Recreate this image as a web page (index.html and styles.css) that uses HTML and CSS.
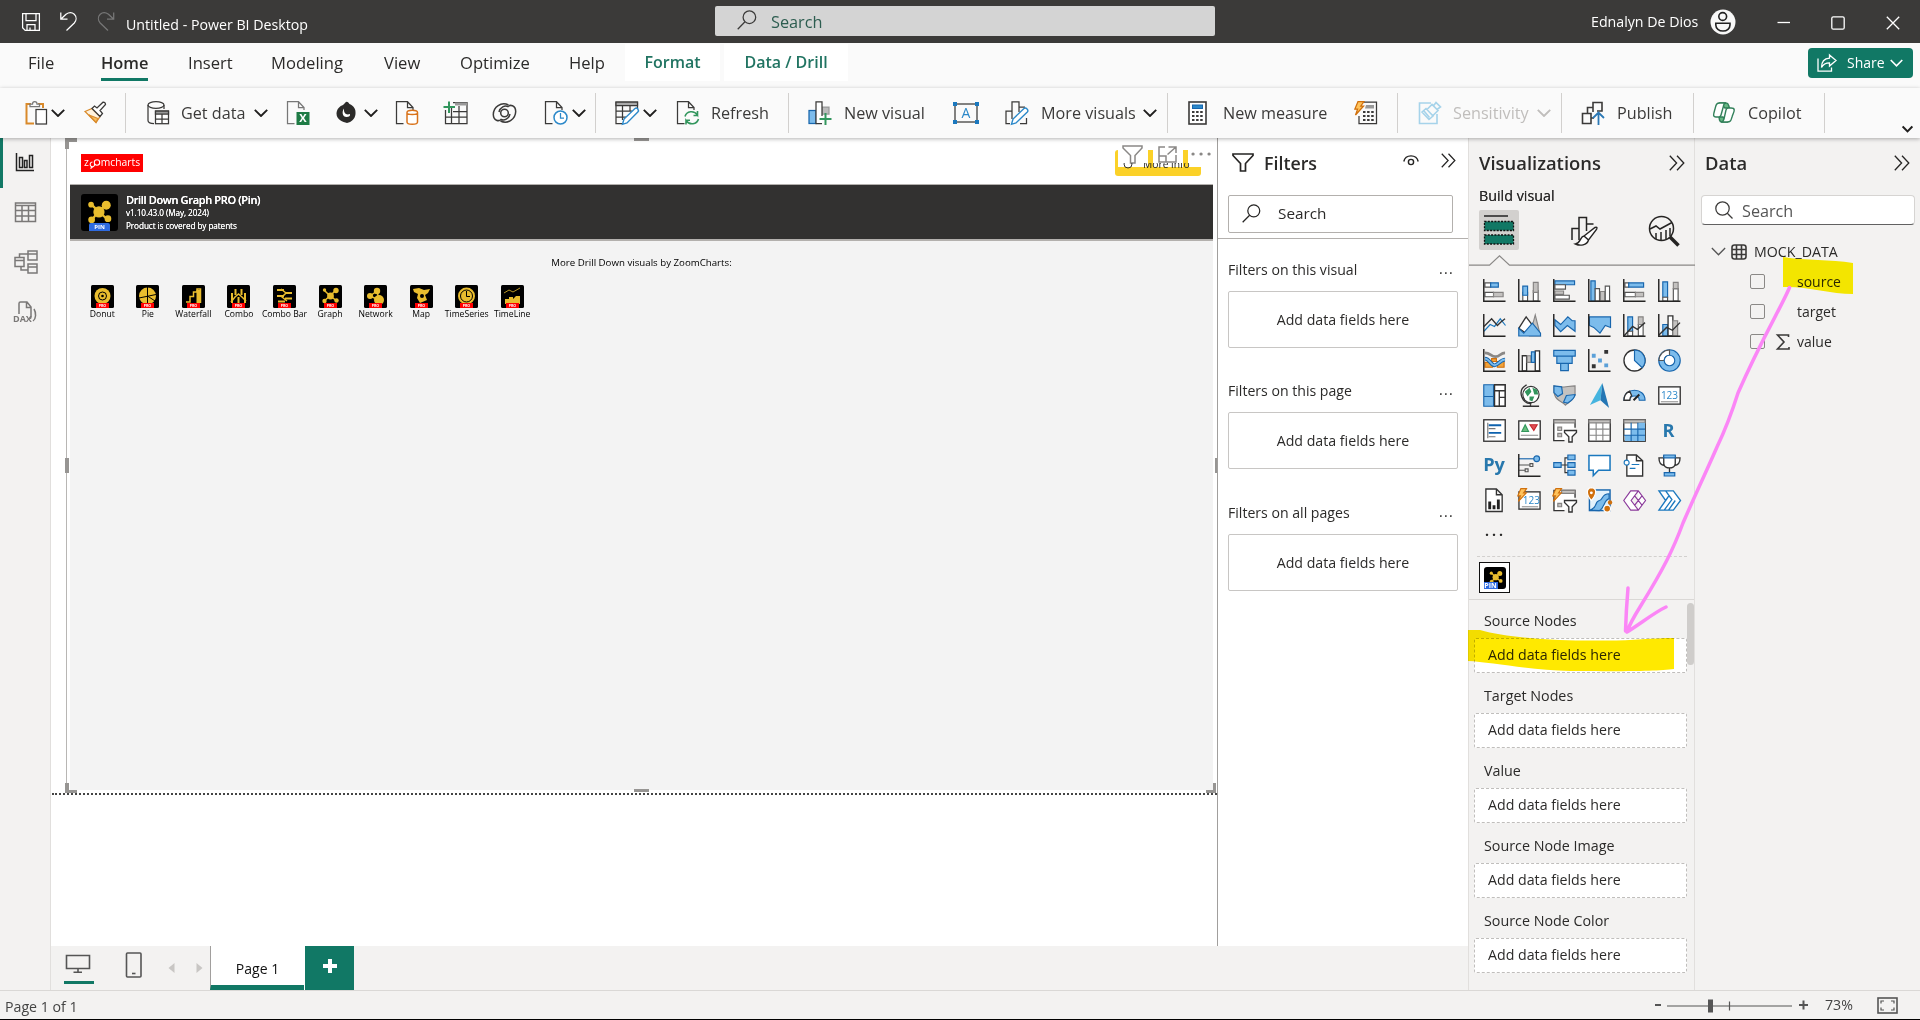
FILE: index.html
```html
<!DOCTYPE html>
<html lang="en">
<head>
<meta charset="utf-8">
<title>Untitled - Power BI Desktop</title>
<link rel="stylesheet" href="styles.css">
</head>
<body>
<svg class="defs" aria-hidden="true">
  <symbol id="chev" viewBox="0 0 14 8"><path d="M.8 .8 7 7 13.2 .8"/></symbol>
  <symbol id="dchev" viewBox="0 0 16 16"><path d="M.8 .8 7.6 8 .8 15.2M8 .8 14.8 8 8 15.2"/></symbol>
  <symbol id="mag" viewBox="0 0 20 20"><circle cx="12.4" cy="7.2" r="6.3"/><path d="M8 11.8.7 19.2"/></symbol>
  <symbol id="doc" viewBox="0 0 24 24"><path d="M8.5 22.500H1.500V.7H12.500L18 6.500V9M12.500.7V6.500H18"/></symbol>
  <symbol id="axes" viewBox="0 0 24 24"><path class="ax" d="M.8 0V23.200H23.500"/></symbol>
  <symbol id="bolt" viewBox="0 0 11 15"><path fill="#ffc35c" stroke="#d0700d" d="M4 .6H10L6.800 5H9.700L1.500 14 3.600 8.200H.8Z"/></symbol>
  <symbol id="graph" viewBox="0 0 24 24"><path stroke="#e9bd2e" stroke-width="2" d="M5 5 11 11 18 5M5 19 11 11 19 18"/><g fill="#e9bd2e" stroke="none"><circle cx="11.500" cy="11.500" r="5"/><circle cx="18" cy="5.500" r="4"/><circle cx="4.500" cy="5" r="2.500"/><circle cx="5" cy="18.500" r="3"/><circle cx="19.500" cy="17.500" r="3"/></g></symbol>
</svg>

<header class="titlebar">
  <svg class="ic" width="18" height="18" viewBox="0 0 18 18"><path d="M.6.6H17.400V17.400H3.200L.6 14.800ZM4 .6V7.500H14V.6M5 17.400V11.500H13V17.400M8 17V14.500"/></svg>
  <svg class="ic" width="18" height="19" viewBox="0 0 18 19"><path d="M.8.5V7.200H7.500M1 7 6 2.200C9 .2 12 .2 14.300 2.300 16.800 4.800 16.500 8.500 14.300 11L6.500 18.500"/></svg>
  <svg class="ic dim" width="18" height="19" viewBox="0 0 18 19"><path d="M16.700.5V7.200H10M16.500 7 11.500 2.200C8.500.2 5.500.2 3.200 2.300.7 4.800 1 8.500 3.200 11L11 18.500"/></svg>
  <span class="doc-title">Untitled - Power BI Desktop</span>
  <div class="top-search"><svg class="ic" width="20" height="20"><use href="#mag"/></svg><span>Search</span></div>
  <span class="user">Ednalyn De Dios</span>
  <svg class="avatar" width="26" height="26" viewBox="0 0 26 26"><circle cx="13" cy="13" r="12.500" fill="#f8f8f8"/><g fill="none" stroke="#222" stroke-width="1.600"><circle cx="12.700" cy="7.500" r="3.900"/><path d="M5.800 14.200H20V16C20 19.500 17 22 13 22S5.800 19.500 5.800 16Z"/></g></svg>
  <svg class="win" width="14" height="14" viewBox="0 0 14 14"><path d="M.5 6.500H13"/></svg>
  <svg class="win" width="14" height="14" viewBox="0 0 14 14"><rect x=".8" y=".8" width="12.400" height="12.400" rx="1.500"/></svg>
  <svg class="win" width="14" height="14" viewBox="0 0 14 14"><path d="M.8.8 13.200 13.200M13.200.8.8 13.200"/></svg>
</header>

<nav class="tabs">
  <span>File</span><span class="active">Home</span><span>Insert</span><span>Modeling</span><span>View</span><span>Optimize</span><span>Help</span><span class="ctx">Format</span><span class="ctx">Data / Drill</span>
  <button class="share"><svg width="20" height="18" viewBox="0 0 20 18"><path d="M1 4.500V17.200H14.500V13.500"/><path d="M12.500 1 19 6.500 12.500 12V8.800C8.500 8.800 6 10.500 4.500 13.500 4.500 8 7.500 4.500 12.500 4.200Z"/></svg><span>Share</span><svg class="share-cv" width="13" height="8"><use href="#chev"/></svg></button>
</nav>

<section class="ribbon">
  <svg class="ic" width="24" height="24" viewBox="0 0 24 24"><path stroke="#d98a2b" stroke-width="2" d="M6 3H1.500V22.500H9M13 3H18V7"/><path fill="#fafafa" stroke="#777" d="M5 5.500V3H7.500C7.500-.2 12 -.2 12 3H14.500V5.500Z"/><rect x="11" y="8.500" width="10.500" height="14.500" fill="#fff"/></svg>
  <svg class="cv"><use href="#chev"/></svg>
  <svg class="ic" width="24" height="24" viewBox="0 0 24 24"><path stroke="#d98a2b" fill="#fff3df" d="M2 10.500 9 7.500 17 15.500 13 21.500Z"/><path fill="#f6bd5c" stroke="#d98a2b" d="M6 14 15 17.500 13 21.500Z"/><path fill="#fff" d="M9 7.500 11.500 5 14 7 20 1.200Q22.500 1 22.500 3.500L17 9.500 19.500 12.500 17 15.500Z"/></svg>
  <i class="sep"></i>
  <svg class="ic" width="24" height="24" viewBox="0 0 24 24"><ellipse cx="10" cy="4" rx="8" ry="3.300"/><path d="M2 4V19.500C2 21 4 22.500 8 22.500M18 4V8"/><rect x="9.500" y="10" width="13" height="12.700" fill="#fff"/><path fill="#999" d="M9.500 10H22.500V13H9.500Z"/><path d="M16 13V22.500M9.500 18H22.500"/></svg>
  <span>Get data</span>
  <svg class="cv"><use href="#chev"/></svg>
  <svg class="ic" width="24" height="24" viewBox="0 0 24 24"><use href="#doc" stroke="#777"/><rect x="10.500" y="11" width="13" height="13" fill="#1e7b45" stroke="none"/><text x="17" y="21" class="t-x">X</text></svg>
  <svg class="ic" width="24" height="24" viewBox="0 0 24 24"><path fill="#2b2a29" stroke="none" d="M10 2Q12-1 14.500 3C19 5 21 8 20.500 13S16.500 21 12 22C8 21 1.500 19 1.500 12.500 1.500 8 5 5 8 4Z"/><path fill="#fff" stroke="none" d="M9 7.500C6.500 11 7.500 16 11.500 16 14 16 15.500 15 15 13 11 14.500 8.500 12 9 7.500Z"/></svg>
  <svg class="cv"><use href="#chev"/></svg>
  <svg class="ic" width="24" height="24" viewBox="0 0 24 24"><use href="#doc"/><path fill="#fff" stroke="#d9731b" stroke-width="1.500" d="M12 11.500V21C12 24 22.500 24 22.500 21V11.500C22.500 8.500 12 8.500 12 11.500ZM12 12C12 14 22.500 14 22.500 12"/></svg>
  <svg class="ic" width="26" height="24" viewBox="0 0 26 24"><path d="M2.500 9V22.500H24V1.500H10M2.500 16H24M8.500 7V22.500M16 5V22.500M10 10.500H24"/><path fill="#999" stroke="none" d="M12 1.500H24V4.500H12Z"/><path stroke="#32965d" stroke-width="2" d="M6 .5V12M.5 6H12"/></svg>
  <svg class="ic swirl" width="25" height="24" viewBox="0 0 25 24"><circle cx="12.500" cy="12" r="3.800"/><path d="M16.500 4C9 .5 1.500 6 1.300 13.500 1.500 20 7 20.500 9 18.500 12 20 17 18 18 13"/><path d="M8.500 20C16 23.500 23.500 18 23.700 10.500 23.500 4 18 3.500 16 5.500 13 4 8 6 7 11"/></svg>
  <svg class="ic" width="24" height="24" viewBox="0 0 24 24"><use href="#doc"/><circle cx="16.500" cy="16.500" r="6.500" fill="#fff" stroke="#2b88c9" stroke-width="1.500"/><path stroke="#2b88c9" d="M16.500 12V17H20"/></svg>
  <svg class="cv"><use href="#chev"/></svg>
  <i class="sep"></i>
  <svg class="ic" width="24" height="24" viewBox="0 0 24 24"><path d="M22.500 8V1H1V22.500H8M1 10H17M1 16H11M7.500 4V19M15 4V10"/><path fill="#aaa" d="M1 1H22.500V4.500H1Z"/><path fill="#fff" stroke="#2b88c9" stroke-width="1.400" d="M7.500 23.300 9 18 20 7.500C22 6 24.500 9 22.800 11L12 22Z"/></svg>
  <svg class="cv"><use href="#chev"/></svg>
  <svg class="ic" width="24" height="24" viewBox="0 0 24 24"><use href="#doc"/><path fill="#fafafa" stroke="none" d="M9 10H24V24H9Z"/><path stroke="#32965d" stroke-width="1.600" d="M9 15.500C10.500 10 18 9 21.500 14V10M21.500 14.500H17.500M22.500 18C21 23.500 13.500 24.500 10 19.500V23.500M10 19.200H14"/></svg>
  <span>Refresh</span>
  <i class="sep"></i>
  <svg class="ic" width="24" height="24" viewBox="0 0 24 24"><path fill="#bbb" stroke="#999" d="M14 6H21V13H14Z"/><rect x="1" y="9.500" width="7" height="13" fill="#7cbcec" stroke="#1866ad"/><path fill="#fff" d="M14 22.500H8V.8H14V15"/><path stroke="#32965d" stroke-width="2" d="M17.500 12V24M11.500 18H23.500"/></svg>
  <span>New visual</span>
  <svg class="ic" width="26" height="24" viewBox="0 0 26 24"><rect x="2" y="3" width="22" height="18"/><g fill="#1b78be" stroke="none"><path d="M0 1H4V5H0ZM22 1H26V5H22ZM0 19H4V23H0ZM22 19H26V23H22Z"/></g><text x="13" y="17" class="t-a">A</text></svg>
  <svg class="ic" width="24" height="24" viewBox="0 0 24 24"><path d="M5 22.500H1V10H7V.8H14V11M7 10V18M14 6H20M15 22.500H21.500V17"/><path fill="#fff" stroke="#2b88c9" stroke-width="1.400" d="M6.500 23.300 8 18 19 7.500C21 6 24 9 22.300 11L11 22Z"/></svg>
  <span>More visuals</span>
  <svg class="cv"><use href="#chev"/></svg>
  <i class="sep"></i>
  <svg class="ic thick" width="24" height="24" viewBox="0 0 24 24"><rect x="3" y="1" width="17" height="22" fill="#fff"/><rect x="6.500" y="4" width="10" height="3.500" fill="#2b88c9" stroke="#1866ad" stroke-width="1"/><path stroke-width="2.200" stroke-dasharray="2.500 1.600" d="M6 11H17.500M6 15H17.500M6 19H17.500"/></svg>
  <span>New measure</span>
  <svg class="ic" width="24" height="24" viewBox="0 0 24 24"><path d="M10 1H22.500V22.500H5V15"/><path stroke-width="2.200" stroke-dasharray="2.500 1.600" d="M9 11H20.500M9 15H20.500M9 19H20.500"/><path fill="#999" stroke="none" d="M12 4H20V7.500H11Z"/><svg width="11" height="15" viewBox="0 0 11 15"><use href="#bolt"/></svg></svg>
  <i class="sep"></i>
  <svg class="ic pale" width="24" height="24" viewBox="0 0 24 24"><path d="M13 2H1.500V22.500H19V13"/><path d="M4 11 8 7.500 15 15 11 18.500ZM9 8.500 14 3.500 20 9.500 15 14.500M12.500 5 10 7.500M15 5.500 18 1.500 22.500 6 19 8.500M6 10 11.500 16.500"/></svg>
  <span class="off">Sensitivity</span>
  <svg class="cv off"><use href="#chev"/></svg>
  <i class="sep"></i>
  <svg class="ic thick" width="24" height="24" viewBox="0 0 24 24"><path d="M16 10H21V1.500H12V6M12 11V6.500H6.500V12M1.500 22.500V12.500H10V22.500ZM10 17H13"/><path stroke="#2b78b5" stroke-width="1.800" d="M17.500 24V12M12 17 17.500 11.500 23 17"/></svg>
  <span>Publish</span>
  <i class="sep"></i>
  <svg class="ic" width="24" height="24" viewBox="0 0 24 24"><g fill="#fff" stroke="#32805a" stroke-width="1.400"><path fill="#68b984" d="M8 2H14Q16 2 16.500 4L17.500 7H13Z"/><path fill="#68b984" d="M15 21H10Q8 21 7.500 19L7 16H11Z"/><path d="M8 2C4 2 4 4 3 8 2 12 0 16 4 16H7Q8.500 16 9 14L11.500 5Q12 2 14 2ZM19 7H16.500Q14.500 7 14 9L12 18Q11 21 9 21H15C19 21 19 19 20 16 21 12 25 7 19 7Z"/></g></svg>
  <span>Copilot</span>
  <i class="sep"></i>
  <svg class="cv small"><use href="#chev"/></svg>
</section>

<main class="work">
  <aside class="rail">
    <svg class="on" width="22" height="22" viewBox="0 0 22 22"><path d="M2.500 1V18.500H20M5.500 5.500H8.500V15.500H5.500ZM10.500 8.500H13V15.500H10.500ZM15.500 3.500H18.500V15.500H15.500Z"/></svg>
    <svg width="22" height="22" viewBox="0 0 22 22"><path d="M1.500 1H21.500V19.500H1.500ZM1.500 3.500H21.500M1.500 8.500H21.500M1.500 14H21.500M8 4V19.500M14.500 4V19.500"/></svg>
    <svg width="24" height="24" viewBox="0 0 24 24"><path d="M14-1H23V8H14ZM1 5.500H10V14.500H1ZM14 12H23V21H14ZM14 2H23M1 8.500H10M14 15H23M5.500 5.500V2H14M7 14.500V18H14"/></svg>
    <svg width="24" height="24" viewBox="0 0 24 24"><path d="M5 12V1.500Q5 0 6.500 0H13L17 5V15Q17 16.500 15.500 16.500M12.500 0V5.500H17M20 7C22.500 11 22 17 19 19"/><text x="-1" y="20" class="t-dax">DAX</text></svg>
  </aside>

  <div class="stage">
    <div class="canvas">
      <div class="page">
        <div class="brand"><span class="logo">z<svg width="12" height="10" viewBox="0 0 12 10"><circle cx="8" cy="3.500" r="2.700"/><path d="M3.500 3C1 3 .5 6 2 7.300 4 8.500 6 7 5.500 5M1.500 9.500 4 7.500"/></svg>mcharts</span></div>
        <div class="hero">
          <svg width="37" height="37" viewBox="0 0 37 37"><rect width="37" height="37" rx="3"/><svg x="5" y="5" width="27" height="27" viewBox="0 0 24 24" fill="none"><use href="#graph"/></svg><path fill="#2f6be0" d="M8 37V31Q8 29 10 29H27Q29 29 29 31V37Z"/><text x="18.500" y="35" class="t-pin">PIN</text></svg>
          <div class="hero-text"><b>Drill Down Graph PRO (Pin)</b><span>v1.10.43.0 (May, 2024)</span><span>Product is covered by patents</span></div>
        </div>
        <div class="body">
          <p>More Drill Down visuals by ZoomCharts:</p>
          <ul class="minis">
            <li><svg viewBox="0 0 23 23"><rect class="k" width="23" height="23" rx="1.500"/><circle class="y" cx="11.500" cy="11" r="8"/><circle cx="11.500" cy="11" r="4" fill="none" stroke="#000"/><circle cx="11.500" cy="11" r="1.300"/><rect class="r" x="5" y="18" width="13" height="5"/><text x="11.500" y="22">PRO</text></svg>Donut</li>
            <li><svg viewBox="0 0 23 23"><rect class="k" width="23" height="23" rx="1.500"/><circle class="y" cx="11.500" cy="11" r="8.500"/><path class="c" d="M11.500 2V20M3 13 20 9.500M11.500 11 19 16"/><rect class="r" x="5" y="18" width="13" height="5"/><text x="11.500" y="22">PRO</text></svg>Pie</li>
            <li><svg viewBox="0 0 23 23"><rect class="k" width="23" height="23" rx="1.500"/><path class="w" d="M4 17H8V11.500H11.500V7H15V4H18.500V18"/><path class="y" d="M14.500 5H18V18H14.500Z"/><rect class="r" x="5" y="18" width="13" height="5"/><text x="11.500" y="22">PRO</text></svg>Waterfall</li>
            <li><svg viewBox="0 0 23 23"><rect class="k" width="23" height="23" rx="1.500"/><path class="y" d="M4 8H6V18H4ZM7.500 4H9.500V10H7.500ZM13.500 4H15.500V10H13.500ZM17 8H19V18H17ZM10.500 12H12.500V18H10.500Z"/><path class="w" d="M4 17 8 12 11.500 9 15 12 19 16"/><rect class="r" x="5" y="18" width="13" height="5"/><text x="11.500" y="22">PRO</text></svg>Combo</li>
            <li><svg viewBox="0 0 23 23"><rect class="k" width="23" height="23" rx="1.500"/><path class="y" d="M4 4H11V6H4ZM12 7H19V9H12ZM4 10H11V12H4ZM12 12.500H19V14.500H12ZM5 15.500H12V17.500H5Z"/><path class="w" d="M8 4 13 8 9 12 14 16"/><rect class="r" x="5" y="18" width="13" height="5"/><text x="11.500" y="22">PRO</text></svg>Combo Bar</li>
            <li><svg viewBox="0 0 23 23"><rect class="k" width="23" height="23" rx="1.500"/><g class="mini-graph"><path class="w" d="M5 5 11 11 17 5M5 16 11 11 18 16"/><circle class="y" cx="11.500" cy="11" r="3.400"/><circle class="y" cx="17" cy="5.500" r="2.700"/><circle class="y" cx="5.500" cy="5" r="1.700"/><circle class="y" cx="5.500" cy="16" r="2.200"/><circle class="y" cx="17.500" cy="15.500" r="2.200"/></g><rect class="r" x="5" y="18" width="13" height="5"/><text x="11.500" y="22">PRO</text></svg>Graph</li>
            <li><svg viewBox="0 0 23 23"><rect class="k" width="23" height="23" rx="1.500"/><circle class="y" cx="13" cy="6" r="3.200"/><circle class="y" cx="6" cy="11" r="3"/><circle class="y" cx="15" cy="15" r="5"/><path class="w" d="M6 11 13 6 15 15Z"/><rect class="r" x="5" y="18" width="13" height="5"/><text x="11.500" y="22">PRO</text></svg>Network</li>
            <li><svg viewBox="0 0 23 23"><rect class="k" width="23" height="23" rx="1.500"/><path class="y" d="M3 4 9 3 14 5 20 4 18 8 15 10 17 15 10 18 7 13 8 9 4 7Z"/><circle cx="12" cy="11" r="2"/><rect class="r" x="5" y="18" width="13" height="5"/><text x="11.500" y="22">PRO</text></svg>Map</li>
            <li><svg viewBox="0 0 23 23"><rect class="k" width="23" height="23" rx="1.500"/><circle class="y" cx="11.500" cy="11" r="8.500"/><circle class="c" cx="11.500" cy="11" r="6"/><path class="c" d="M11.500 6V11.500H15"/><rect class="r" x="5" y="18" width="13" height="5"/><text x="11.500" y="22">PRO</text></svg>TimeSeries</li>
            <li><svg viewBox="0 0 23 23"><rect class="k" width="23" height="23" rx="1.500"/><path class="thinline" d="M3 8 8 5 12 7 19 3"/><path class="y" d="M4 14H8V12H12V14L15 11H19V19H4Z"/><rect class="r" x="5" y="18" width="13" height="5"/><text x="11.500" y="22">PRO</text></svg>TimeLine</li>
          </ul>
        </div>
        <i class="h tl"></i><i class="h tm"></i><i class="h ml"></i><i class="h mr"></i><i class="h bl"></i><i class="h bm"></i><i class="h br"></i>
        <div class="more-bg"></div>
        <div class="vis-tools">
          <span><svg width="21" height="19" viewBox="0 0 21 19"><path d="M1 1H20V3L13 10.500V18H8.500V10.500L1 3Z"/></svg></span>
          <span><svg width="19" height="17" viewBox="0 0 19 17"><path d="M7 1H1V16H18V9M1 10H8V16M10.500 1H18V7M18 1 9.500 8.500"/></svg></span>
          <span><svg width="20" height="6" viewBox="0 0 20 6"><path class="dots" d="M2 3H2.100M10 3H10.100M18 3H18.100"/></svg></span>
        </div>
        <div class="more-info"><svg width="10" height="10" viewBox="0 0 10 10"><circle cx="5" cy="5" r="4"/></svg>More info</div>
      </div>
    </div>

    <aside class="filters">
      <div class="f-head"><svg width="22" height="19" viewBox="0 0 22 19"><path stroke-width="1.700" d="M1 1H21V2.500L13.500 10.500V18H8.500V10.500L1 2.500Z"/></svg><h2>Filters</h2><svg class="eye" width="16" height="11" viewBox="0 0 16 11"><path d="M.8 6.500C2.500-1 13.500-1 15.200 6.500"/><circle cx="8" cy="7" r="2.600"/></svg><svg class="thin" width="15" height="15"><use href="#dchev"/></svg></div>
      <div class="f-search"><svg class="thin" width="19" height="19"><use href="#mag"/></svg><span>Search</span></div>
      <div class="f-group"><h3>Filters on this visual<em>...</em></h3><div class="f-drop">Add data fields here</div></div>
      <div class="f-group"><h3>Filters on this page<em>...</em></h3><div class="f-drop">Add data fields here</div></div>
      <div class="f-group"><h3>Filters on all pages<em>...</em></h3><div class="f-drop">Add data fields here</div></div>
    </aside>

    <footer class="pages">
      <span class="desk"><svg width="26" height="20" viewBox="0 0 26 20"><path d="M1.500 1.500H24.500V14.500H1.500ZM13 14.500V18M8.500 18.200H17"/></svg></span>
      <svg width="18" height="26" viewBox="0 0 18 26"><rect x="1.500" y="1" width="14.500" height="24" rx="1"/><path d="M7 21.500H10.500"/></svg>
      <svg class="tri" width="7" height="12" viewBox="0 0 7 12"><path d="M6.500 1V11L.5 6Z"/></svg>
      <svg class="tri" width="7" height="12" viewBox="0 0 7 12"><path d="M.5 1V11L6.500 6Z"/></svg>
      <span class="ptab">Page 1</span>
      <span class="add"><svg width="14" height="14" viewBox="0 0 14 14"><path d="M7 0V14M0 7H14"/></svg></span>
    </footer>
  </div>

  <aside class="viz">
    <div class="p-head"><h2>Visualizations</h2><svg class="thin" width="16" height="16"><use href="#dchev"/></svg></div>
    <div class="sub">Build visual</div>
    <div class="modes">
      <span class="sel"><svg width="32" height="32" viewBox="0 0 32 32"><path stroke="#222" d="M1 2H25"/><g fill="#117865" stroke="#111" stroke-width="1.300" stroke-dasharray="2 1.300"><rect x="1.500" y="7.500" width="29" height="9"/><rect x="1.500" y="21" width="29" height="9"/></g></svg></span>
      <svg class="ic" width="28" height="30" viewBox="0 0 28 30"><path stroke-width="1.500" d="M2 24V12.500H9V24M9 12V1.500H16.500V15M16.500 8H23.500"/><path fill="#fff" stroke-width="1.400" d="M14 20 25 11.500Q28 10.500 26.500 13.500L18.500 24ZM14 20C10 20.500 11 27 5.500 28 10 30 17 29.500 18.500 24Z"/></svg>
      <svg class="ic" width="32" height="32" viewBox="0 0 32 32"><circle cx="13.500" cy="13.500" r="12" stroke-width="1.500"/><path stroke-width="1.500" d="M2 14 8 11 12 14 24 7.500M8 24V18M13 25V17M18 24V15M22 21V13"/><path stroke-width="3.500" d="M22 22 30.500 30.500"/></svg>
    </div>
    <svg class="notch" width="226" height="11" viewBox="0 0 226 11"><path d="M0 10.200H20.500L30.500.8 40.500 10.200H226"/></svg>
    <div class="vgrid">
      <svg viewBox="0 0 24 24"><path class="w" d="M2 4H8V8.500H2Z"/><path class="b" d="M8 4H16V8.500H8Z"/><path class="w" d="M2 14H11V18.500H2Z"/><path class="g" d="M11 14H21V18.500H11Z"/><use href="#axes"/></svg>
      <svg viewBox="0 0 24 24"><path class="w" d="M5 14H10V23H5ZM16 12H21V23H16Z"/><path class="b" d="M5 7.500H10V17H5Z"/><path class="g" d="M16 3.500H21V14H16Z"/><use href="#axes"/></svg>
      <svg viewBox="0 0 24 24"><path class="b" d="M2 2H22.500V6H2Z"/><path class="w" d="M2 6H13V10.500H2Z"/><path class="g" d="M2 12.500H11V16H2Z"/><path class="w" d="M2 17H17V21H2Z"/><use href="#axes"/></svg>
      <svg viewBox="0 0 24 24"><path class="b" d="M3 2H7.500V23H3Z"/><path class="w" d="M7.500 10H12V23H7.500Z"/><path class="g" d="M13 13H17.500V23H13Z"/><path class="w" d="M18 7.500H22.500V23H18Z"/><use href="#axes"/></svg>
      <svg viewBox="0 0 24 24"><path class="w" d="M2 4H6V8.500H2Z"/><path class="b" d="M6 4H21.500V8.500H6Z"/><path class="w" d="M2 14H13V18.500H2Z"/><path class="g" d="M13 14H21.500V18.500H13Z"/><use href="#axes"/></svg>
      <svg viewBox="0 0 24 24"><path class="b" d="M5 3H10V19H5Z"/><path class="w" d="M5 19H10V23H5ZM16 10H21V23H16Z"/><path class="g" d="M16 3.500H21V10H16Z"/><use href="#axes"/></svg>

      <svg viewBox="0 0 24 24"><path class="blue" d="M1 18 7.500 11 12 13 18 5 23.500 12"/><path class="dl" d="M1 13 9 5 15 12 19 8 23 5"/><use href="#axes"/></svg>
      <svg viewBox="0 0 24 24"><path class="g" d="M12 23 18 1 23.500 23Z"/><path class="w dk" d="M.8 15 8.500 3 16 13 8 20Z"/><path class="b" d="M.8 23V15L6 20 15 9.500 23.500 20V23Z"/></svg>
      <svg viewBox="0 0 24 24"><path class="b" d="M2 6 8 11 15.500 3 20 7H23V18L15 12 8 18.500 2 12Z"/><use href="#axes"/></svg>
      <svg viewBox="0 0 24 24"><path class="b" d="M1.500 3H23.500V14L18 12 12.500 20 6 14 1.500 12Z"/><use href="#axes"/></svg>
      <svg viewBox="0 0 24 24"><path class="b" d="M5 3H10V18H5Z"/><path class="w" d="M5 18H10V23H5ZM16 11H21V23H16Z"/><path class="g" d="M16 3H21V11H16Z"/><path class="dl" d="M1 23 10 13 15 16 23 9"/><use href="#axes"/></svg>
      <svg viewBox="0 0 24 24"><path class="b" d="M5 11H10V23H5Z"/><path class="w dk" d="M10.500 2H15.500V23H10.500Z"/><path class="g" d="M15.500 7H20.500V23H15.500Z"/><path class="dl" d="M1 22 9 14 15 17 23 9"/><use href="#axes"/></svg>

      <svg viewBox="0 0 24 24"><path fill="#f2a33a" stroke="#d0700d" d="M2 14H10V19H2ZM15 13H22V19H15ZM9 10H14V13H9Z"/><path stroke="#8a8886" stroke-width="3" d="M2 4C8 4 8 8 13 8S18 4 23 4"/><path stroke="#1866ad" stroke-width="4" d="M2 10C7 10 8 17 12 17S18 11 23 11"/><path stroke="#7cbcec" stroke-width="2" d="M2 10C7 10 8 17 12 17S18 11 23 11"/><use href="#axes"/></svg>
      <svg viewBox="0 0 24 24"><path class="w dk" d="M4.500 7H9V23H4.500ZM18 2H22.500V23H18Z"/><path class="g" d="M9.500 7H13.500V14H9.500Z"/><path class="b" d="M14 3H17.500V14H14Z"/><use href="#axes"/></svg>
      <svg viewBox="0 0 24 24"><path class="b" d="M.8 1.500H23.200V7.500H.8ZM4 7.500H20V15H4ZM8 15H16V22.500H8Z"/></svg>
      <svg viewBox="0 0 24 24"><path fill="#333" stroke="none" d="M17 1H21V5H17ZM4 16H8V20H4Z"/><path fill="#5ba0d8" stroke="none" d="M4 5H8V9H4ZM10.500 10H14.500V14H10.500ZM17 15H21V19H17Z"/><use href="#axes"/></svg>
      <svg viewBox="0 0 24 24"><circle class="w dk" cx="12" cy="12" r="11"/><path class="b" d="M12 12V1A11 11 0 0 1 20 19.500Z"/></svg>
      <svg viewBox="0 0 24 24"><circle class="b" cx="12" cy="12" r="11.200"/><path class="w" d="M12 1A11 11 0 0 0 1 12H6.500A5.500 5.500 0 0 1 12 6.500Z"/><circle cx="12" cy="12" r="5.500" fill="#fff" stroke="#1866ad"/></svg>

      <svg viewBox="0 0 24 24"><path class="w" d="M12 .8H23.200V23.200H12Z"/><path class="b" d="M.8.8H11V13H.8ZM.8 13H11V23.200H.8Z"/><path class="dl" d="M12 .8H23.200V23.200H12ZM12 7H23M17 7V23M17 14H23"/></svg>
      <svg viewBox="0 0 24 24"><path class="dl" d="M9 1C-1 6 3 20 14 20.500M13 20V23M5 23.200H22"/><circle cx="13.500" cy="11" r="8.500" fill="#fff" stroke="#333"/><path fill="#32965d" stroke="none" d="M7 8 12 4 14 8 10 13ZM15 4 20 6 21 11 17 11ZM12 13 17 13 15 18 12 17Z"/></svg>
      <svg viewBox="0 0 24 24"><path class="g" d="M1 2C7 5 16 2 23 2V12C20 18 16 19 13 22 10 18 4 18 2 12L1 9Z"/><path class="b" d="M1 2 9 3 10 10 5 13 1 9ZM14 12 23 11C22 16 18 18 15 20L11 19Z"/></svg>
      <svg viewBox="0 0 24 24"><path fill="#45b4df" stroke="none" d="M15-1 2 22 13 17Z"/><path fill="#2476b4" stroke="none" d="M15-1 22 25 13 17Z"/></svg>
      <svg viewBox="0 0 24 24"><path class="b" d="M1 17C1 3 23 3 23 17H17C17 11 7 11 7 17Z"/><path class="w dk" d="M1 17C1 12 3.500 9 7 7.500L9 12Q7 14 7 17Z"/><path stroke="#222" stroke-width="2" d="M11 17 17 11"/></svg>
      <svg viewBox="0 0 24 24"><rect class="w dk" x=".8" y="3" width="22.400" height="18"/><path stroke="#999" d="M3 18.500H21"/><text x="12" y="15.500">123</text></svg>

      <svg viewBox="0 0 24 24"><rect class="w dk" x=".8" y=".8" width="22.400" height="22.400"/><path stroke="#777" d="M5 4V20M6 10H13M6 18.500H13"/><path stroke="#0d62ae" stroke-width="2" d="M6 6.500H19M6 14.500H19"/></svg>
      <svg viewBox="0 0 24 24"><rect class="w dk" x=".8" y="2" width="22.400" height="19"/><path fill="#6abf7e" stroke="#32965d" d="M4 13 7.500 6 11 13Z"/><path fill="#e04f55" stroke="#c5262c" d="M12.500 6H20L16.500 12Z"/><path stroke="#999" d="M3 17H21"/></svg>
      <svg viewBox="0 0 24 24"><path class="w dk" d="M23 9V1H.8V22.500H12"/><path class="g" d="M1 1H23V4H1ZM5 8.500H9V12H5ZM5 15H9V18.500H5Z"/><path class="w dk" d="M12 12H24.500V14L20 18.500V24H16.500V18.500L12 14Z"/></svg>
      <svg viewBox="0 0 24 24"><rect class="w dk" x=".8" y=".8" width="22.400" height="22.400"/><path class="g" d="M1 1H23V4H1Z"/><path stroke="#888" d="M1 10.500H23M1 17H23M8.500 4V23M15.500 4V23"/></svg>
      <svg viewBox="0 0 24 24"><rect class="w dk" x=".8" y=".8" width="22.400" height="22.400"/><path class="g" d="M1 1H23V4H1Z"/><path fill="#7cbcec" stroke="none" d="M16 4H23V23H2V17H9V11H16Z"/><path stroke="#1866ad" d="M1 10.500H23M1 17H23M8.500 4V23M15.500 4V23"/></svg>
      <svg viewBox="0 0 24 24"><text x="11" y="18.500" class="big">R</text></svg>

      <svg viewBox="0 0 24 24"><text x="11.500" y="17.500" class="big">Py</text></svg>
      <svg viewBox="0 0 24 24"><path stroke="#1866ad" d="M1 5H17"/><circle class="b" cx="19.500" cy="5" r="3"/><path stroke="#555" d="M1 11.500H12M1 17H7M12.500 10H15.500V13H12.500ZM7.500 15.500H10.500V18.500H7.500Z"/><use href="#axes"/></svg>
      <svg viewBox="0 0 24 24"><path stroke="#333" d="M8 11.500H16M16 4H12.500V19.500H16"/><path class="b" d="M.8 9H8.500V14H.8ZM15.500 1H23V6H15.500ZM15.500 9H23V14H15.500ZM15.500 17H23V22H15.500Z"/></svg>
      <svg viewBox="0 0 24 24"><path fill="#fff" stroke="#1b78be" stroke-width="1.600" d="M1 1.500H23V17H11L5.500 22.500V17H1Z"/></svg>
      <svg viewBox="0 0 24 24"><path class="w dk" d="M4 23V1H14L20.500 7V23ZM14 1V7H20.500"/><circle cx="3.800" cy="9" r="2.600" fill="#fff" stroke="#1b78be"/><path stroke="#1b78be" d="M9 11H17M7 15H13"/></svg>
      <svg viewBox="0 0 24 24"><path class="w dk" d="M6 2H18V10C18 16 6 16 6 10ZM6 4H1C1 9 3 12 7 12M18 4H23C23 9 21 12 17 12M12 15V20"/><path class="b" d="M6 1H18V4H6ZM6.500 19.500H17.500V23H6.500Z"/></svg>

      <svg viewBox="0 0 24 24"><path class="w dk" d="M3 23.500V0H14L20 6V23.500ZM14 0V6H20"/><path fill="#222" stroke="none" d="M5.500 13H8.500V21H5.500ZM10 17H13V21H10ZM14.500 11H17.500V21H14.500Z"/></svg>
      <svg viewBox="0 0 24 24"><rect class="w dk" x="1" y="3" width="22" height="18"/><text x="14" y="16">123</text><path stroke="#999" d="M4 18.500H21"/><svg x="-1" y="-1" width="11" height="15" viewBox="0 0 11 15"><use href="#bolt"/></svg></svg>
      <svg viewBox="0 0 24 24"><path class="w dk" d="M23 9V1.500H1V22.500H12"/><path class="g" d="M9 1.500H23V4.500H9ZM5 15H9V18.500H5Z"/><path class="w dk" d="M12 12H24.500V14L20 18.500V24H16.500V18.500L12 14Z"/><svg x="-1" y="-1" width="11" height="15" viewBox="0 0 11 15"><use href="#bolt"/></svg></svg>
      <svg viewBox="0 0 24 24"><rect x="1.500" y="1" width="21.500" height="21.500" fill="#e4f2fb" stroke="#1866ad" stroke-width="1.500"/><path class="b" d="M1.500 22C11 20 6 13 12 12 16 11 14 5 22 5V10C16 12 18 19 12 22.500Z"/><path fill="#d0700d" stroke="#fff" d="M3.500-1.500C10-1 9 6 3.500 12-2 6-2-1 3.500-1.500Z"/><circle cx="3.500" cy="4" r="1.500" fill="#fff"/><circle cx="20" cy="20.500" r="3.500" fill="#d0700d" stroke="#fff"/><circle cx="23" cy="14" r="2.300" fill="#d0700d" stroke="none"/></svg>
      <svg viewBox="0 0 24 24"><path fill="#fff" stroke="#8b3a9b" stroke-width="1.200" d="M8 2H16L23.500 12 16 22H8L.8 12ZM12 7 20 17M16 2 8.500 12 16 22M12 17 20 7"/></svg>
      <svg viewBox="0 0 24 24"><path fill="#fff" stroke="#1b78be" stroke-width="1.400" d="M1 2H16L23.500 12 16 22H1L8 12ZM8 2 14.500 11 6.500 22M8 12 11.500 7M11 22 18 12"/></svg>
      <b class="vdots">...</b>
    </div>
    <div class="custom"><span><svg width="22" height="22" viewBox="0 0 22 22"><rect width="22" height="22" rx="3"/><svg x="4" y="3" width="16" height="15" viewBox="0 0 24 24" fill="none"><use href="#graph"/></svg><path fill="#2f6be0" d="M0 15H14V22H0Z"/><text x="6.500" y="21" class="t-pin2">PIN</text></svg></span></div>
    <div class="wells">
      <label>Source Nodes</label><div>Add data fields here</div>
      <label>Target Nodes</label><div>Add data fields here</div>
      <label>Value</label><div>Add data fields here</div>
      <label>Source Node Image</label><div>Add data fields here</div>
      <label>Source Node Color</label><div>Add data fields here</div>
      <i class="scroll"></i>
    </div>
  </aside>

  <aside class="data">
    <div class="p-head"><h2>Data</h2><svg class="thin" width="16" height="16"><use href="#dchev"/></svg></div>
    <div class="d-search"><svg class="ic" width="18" height="18" viewBox="0 0 18 18"><circle cx="7.500" cy="7.500" r="6.700"/><path d="M12.300 12.300 17.500 17.500"/></svg><span>Search</span></div>
    <div class="table-row"><svg class="ic" width="15" height="9"><use href="#chev"/></svg><svg class="ic thick" width="16" height="16" viewBox="0 0 16 16"><rect x="1" y="1" width="14" height="14" rx="2.500"/><path d="M1 5.500H15M1 10.500H15M5.500 1V15M10.500 1V15"/></svg><span>MOCK_DATA</span></div>
    <div class="field"><i></i><b></b><span>source</span></div>
    <div class="field"><i></i><b></b><span>target</span></div>
    <div class="field"><i></i><b><svg class="ic thick" width="14" height="16" viewBox="0 0 14 16"><path d="M12.500 3V1H1.500L8 8 1.500 15H13V13"/></svg></b><span>value</span></div>
  </aside>
</main>

<footer class="status">
  <span>Page 1 of 1</span>
  <svg width="154" height="16" viewBox="0 0 154 16"><path stroke-width="2" d="M0 8H6M144 8H153M148.500 3.500V12.500"/><path stroke-width="1.200" d="M12 9H137M74.500 4.500V13.500"/><path stroke-width="5" d="M55.500 2.500V15.500"/></svg>
  <span class="pct">73%</span>
  <svg width="21" height="17" viewBox="0 0 21 17"><rect x="1" y="1" width="19" height="15" stroke-width="1.600"/><path stroke-width="1.200" d="M4 6.500V4H7M14 4H17V6.500M17 10.500V13H14M7 13H4V10.500"/></svg>
</footer>

<svg class="ink mark" width="1920" height="1020"><path fill="#fff200" d="M1783 257C1806 261 1830 259 1853 263V294C1830 294 1806 286 1783 287Z"/><path fill="#ffe900" d="M1468 630H1480C1510 639 1570 641 1600 640.500 1630 641 1650 638 1674 638V669C1655 672 1600 671 1570 671 1530 670 1490 662 1468 661Z"/></svg>
<svg class="ink" width="1920" height="1020"><path class="pen" d="M1789.500 287.500C1782 306 1762 338 1738 393 1732 412 1728 424 1717 447 1707 470 1696 493 1683 523 1673 550 1664 568 1640 607Q1630 623 1627 632M1628 588C1627 600 1626 615 1625.500 631M1666 607C1655 612 1640 624 1627 632"/></svg>
</body>
</html>
```

FILE: styles.css
```css
* { box-sizing: border-box; }
body {
  margin: 0; width: 1920px; height: 1020px; overflow: hidden; position: relative;
  display: flex; flex-direction: column;
  font: 14.2px/20px "Open Sans", "Noto Sans", sans-serif; color: #2b2a29; background: #f3f2f1;
  white-space: nowrap;
}
h2, h3, p, ul { margin: 0; padding: 0; font-weight: 400; }
i, em { font-style: normal; }
svg { flex: none; display: block; overflow: visible; fill: none; }
.defs { position: absolute; width: 0; height: 0; }
.ic { stroke: #3b3a39; stroke-width: 1.25; }
.ic.thick { stroke-width: 1.6; }
.ic.swirl { stroke-width: 1.500; }
.thin { stroke: #252423; stroke-width: 1.3; }
svg text { stroke: none; text-anchor: middle; font-family: "Open Sans", sans-serif; }

/* title bar */
.titlebar { height: 43px; background: #3b3a39; color: #fff; display: grid; align-items: center; padding-left: 22px;
  grid-template-columns: 38px 37px 29px 589px 876px 120px 66px 54px 55px 20px; }
.titlebar > .ic { stroke: #fff; }
.titlebar > .dim { stroke: #777; }
.doc-title { padding-top: 7px; }
.top-search { width: 500px; height: 30px; margin-top: -1px; background: #d4d4d4; border-radius: 2px; display: flex; align-items: center;
  padding-left: 22px; gap: 14px; color: #2d5d50; font-size: 16.3px; }
.top-search span { padding-top: 1px; }
.top-search .ic { margin-top: -3px; }
.avatar { margin-left: -1px; }
.win { stroke: #fff; stroke-width: 1.3; margin-top: 3px; }

/* ribbon tabs */
.tabs { height: 45px; background: #fafafa; display: grid; align-items: start; padding-left: 28px; font-size: 16.6px; line-height: 39px;
  grid-template-columns: 73px 87px 83px 113px 76px 109px 56px 99px 1084px 105px; }
.tabs > .active { font-weight: 600; font-size: 16.4px; justify-self: start; height: 38px; border-bottom: 3px solid #117865; }
.tabs > .ctx { background: #fff; color: #217462; font-weight: 600; font-size: 16px; text-align: center; width: 95px; height: 37px; margin-top: 1px; line-height: 37px; }
.tabs > .ctx + .ctx { width: 124px; }
.share { margin-top: 5px; height: 30px; border: 0; border-radius: 4px; background: #117865; color: #fff; font: 14px "Open Sans", sans-serif;
  display: flex; align-items: center; padding: 0 9px 1px; stroke: #fff; stroke-width: 1.3; }
.share span { margin-left: 10px; stroke: none; }
.share .share-cv { margin-left: 5px; stroke-width: 1.8; }

/* ribbon commands */
.ribbon { height: 50px; background: #fafafa; box-shadow: 0 1px 4px rgba(0,0,0,.3); position: relative; z-index: 2; display: grid; align-items: center;
  padding-left: 25px; font-size: 16.2px; color: #3b3a39;
  grid-template-columns: 26px 32px 42px 21px 35px 73px 32px 49px 29px 31px 48px 49px 52px 28px 23px 20px 28px 33px 35px 77px 20px 36px 109px 52px 36px 102px 24px 19px 37px 131px 43px 21px 35px 84px 24px 20px 36px 76px 19px 36px 76px 78px 12px; }
.sep { width: 1px; height: 40px; background: #d2d0ce; }
.cv { width: 14px; height: 8px; stroke: #201f1e; stroke-width: 1.9; }
.cv.small { width: 11px; height: 8px; margin-top: 31px; stroke-width: 2.600; }
.ribbon .off { color: #c0bebc; stroke: #c0bebc; }
.ic.pale { stroke: #a6d3ea; stroke-width: 1.6; }
svg .t-x { font-size: 11px; font-weight: 700; fill: #fff; }
svg .t-a { font-size: 14px; fill: #2b88c9; }

/* work area */
.work { height: 852px; display: grid; grid-template-columns: 51px 1417px 227px 225px; grid-template-rows: 852px; }
.rail { border-right: 1px solid #e1dfdd; padding: 14px 0 0 14px; display: flex; flex-direction: column; gap: 28px; stroke: #7a7877; stroke-width: 1.5;
  background: linear-gradient(#117865, #117865) 0 0 / 3px 50px no-repeat; }
.rail .on { stroke: #222; }
.rail svg:nth-child(4) { margin-top: -2px; }
svg .t-dax { font-size: 9px; font-weight: 700; fill: #7a7877; text-anchor: start; }
.stage { display: grid; grid-template-columns: 1167px 250px; grid-template-rows: 808px 44px; }

.canvas { background: #fff; border-right: 1px solid #a19f9d; padding: 0 0 0 1px; }
.page { position: relative; height: 657px; border-bottom: 2px dotted #444; padding: 0 3px 4px 18px; }
.page::before { content: ""; position: absolute; left: 14px; top: 0; width: 1px; height: 654px; background: #b8b6b4; }
.brand { height: 47px; border-bottom: 1px solid #b3b0ad; padding: 16px 0 0 11px; margin-right: 1px; }
.logo { display: flex; align-items: center; justify-content: center; width: 62px; height: 18px; background: #f00; color: #fff; font-size: 10.300px; line-height: 18px; padding-bottom: 2px; }
.logo svg { stroke: #fff; stroke-width: 1.100; margin-top: 3px; }
.hero { height: 56px; margin: 0 1px 0 0; background: #323130; border-bottom: 2px solid #b3b0ad; display: flex; align-items: center; padding-left: 11px; gap: 8px; color: #fff; }
.hero > svg { fill: #000; }
.hero-text { display: flex; flex-direction: column; font-size: 8.200px; line-height: 12.500px; letter-spacing: -.08px; padding-top: 1px; text-shadow: 0 0 .5px #fff; }
.hero-text b { font-size: 11px; font-weight: 600; line-height: 14px; letter-spacing: -.35px; text-shadow: 0 0 .6px #fff; }
svg .t-pin { font-size: 6px; font-weight: 700; fill: #fff; }
.body { height: 549px; margin-right: 1px; background: #f3f3f3; padding-top: 12px; color: #000; }
.body p { text-align: center; font-size: 9.700px; line-height: 20px; }
.minis { list-style: none; display: flex; margin: 12px 0 0 9.500px; font-size: 8.600px; line-height: 13px; }
.minis li { width: 45.560px; display: flex; flex-direction: column; align-items: center; }
.minis svg { width: 23px; height: 23px; fill: #000; }
.minis .k { fill: #000; } .minis .y { fill: #e9bd2e; } .minis .r { fill: #f00; }
.minis .c { fill: none; stroke: #000; } .minis .w { fill: none; stroke: #e9bd2e; stroke-width: 1.500; }
.minis .thinline { fill: none; stroke: #b99625; stroke-width: 1; }
.minis text { font-size: 3.500px; font-weight: 700; fill: #fff; }

.h { position: absolute; border: 0 solid #979593; }
.tl { left: 13px; top: 0; width: 12px; height: 11px; border-width: 4px 0 0 4px; }
.tm { left: 582px; top: 0; width: 15px; border-top-width: 3px; }
.ml { left: 13px; top: 320px; height: 15px; border-left-width: 4px; }
.mr { right: 0; top: 320px; height: 15px; border-left-width: 2px; }
.bl { left: 13px; top: 645px; width: 12px; height: 10px; border-width: 0 0 3px 4px; }
.bm { left: 582px; top: 651px; width: 15px; border-top-width: 3px; }
.br { right: 1px; top: 645px; width: 10px; height: 10px; border-width: 0 3px 3px 0; }

.more-bg { position: absolute; left: 1063px; top: 12px; width: 86px; height: 26px; border-radius: 3px; background: #fbd128; }
.more-info { position: absolute; left: 1071px; top: 16px; color: #222; font-size: 10.300px; line-height: 20px; display: flex; align-items: center; gap: 10px; stroke: #333; clip-path: inset(9px 0 0 0); }
.vis-tools { position: absolute; left: 1066px; top: 4px; display: flex; gap: 5px; stroke: #8a8886; stroke-width: 1.500; }
.vis-tools span { width: 30px; height: 25px; background: #fff; display: flex; justify-content: center; align-items: center; padding: 0 1px 1px 0; }
.vis-tools span:nth-child(3) { width: 27px; padding-bottom: 2px; }
.dots { stroke-width: 3.200; stroke-linecap: round; }

/* filters pane */
.filters { background: #fff; }
.f-head { height: 57px; padding: 0 12px 8px 14px; display: flex; align-items: center; stroke: #252423; stroke-width: 1.4; }
.f-head h2 { font-size: 17.800px; font-weight: 600; margin-left: 10px; flex: 1; stroke: none; }
.f-head .eye { margin: -5px 22px 0 0; }
.f-head .thin { margin-top: -4px; }
.f-search { margin: 0 15px 5px 10px; height: 38px; border: 1px solid #b3b0ad; border-radius: 2px; display: flex; align-items: center; gap: 17px; padding: 0 0 2px 13px; font-size: 15.300px; }
.f-search + .f-group { border-top: 1px solid #b3b0ad; }
.f-group { height: 121.800px; padding: 21px 10px 0 10px; }
.f-group h3 { font-size: 14.100px; line-height: 20px; display: flex; justify-content: space-between; }
.f-group em { margin: 3px 4px 0 0; line-height: 12px; letter-spacing: 1.300px; }
.f-drop { margin-top: 11px; height: 57px; border: 1px solid #c8c6c4; border-radius: 2px; text-align: center; line-height: 55px; }

/* page tabs */
.pages { grid-column: 1 / 3; display: grid; grid-template-columns: 61px 43px 28px 14px 94px 50px; grid-template-rows: 44px; padding-left: 13px; stroke: #555; stroke-width: 1.600; }
.desk { width: 30px; height: 38px; padding: 8px 0 0 1px; border-bottom: 3px solid #117865; }
.pages > svg { margin-top: 6px; }
.pages > .tri { margin-top: 16px; fill: #c8c6c4; stroke: none; }
.ptab { stroke: none; background: #fff; border-left: 1px solid #a19f9d; border-bottom: 5px solid #117865; text-align: center; line-height: 45px; font-size: 14px; color: #111; }
.add { background: #117865; stroke: #fff; stroke-width: 4; padding: 13px 0 0 18px; border-left: 1px solid #fff; }

/* visualizations pane */
.viz { border-left: 1px solid #e1dfdd; border-right: 1px solid #e1dfdd; }
.p-head { height: 49px; display: flex; justify-content: space-between; align-items: center; padding: 0 9px 0 10px; }
.p-head h2 { font-size: 18.400px; font-weight: 600; }
.sub { padding-left: 10px; font-size: 14.300px; line-height: 18px; text-shadow: 0 0 .4px #444; }
.modes { height: 50px; display: flex; align-items: center; padding: 0 14px 2px 10px; margin-top: 4px; justify-content: space-between; }
.modes .sel { width: 40px; height: 40px; background: #d2d0ce; border-radius: 2px; padding: 4px; margin-top: -7px; stroke: #222; stroke-width: 1.500; }
.modes .ic { margin-top: -5px; stroke: #252423; }
.notch { stroke: #8a8886; stroke-width: 1.200; margin-top: -4px; }
.vgrid { display: grid; grid-template-columns: repeat(6, 35px); grid-auto-rows: 35px; padding: 13px 0 0 14px; height: 290px; }
.vgrid svg { width: 23px; height: 23px; stroke-width: 1.200; }
.vgrid svg svg { width: 11px; height: 15px; }
.ax { stroke: #252423; stroke-width: 1.500; fill: none; }
.b { fill: #7cbcec; stroke: #1866ad; }
.g { fill: #c4c2c0; stroke: #858382; }
.w { fill: #fff; stroke: #555; }
.dk, .dl { stroke: #333; stroke-width: 1.400; }
.blue { stroke: #1b78be; }
.vgrid text { font-size: 10.500px; fill: #2b88c9; }
.vgrid .big { font-size: 19px; font-weight: 700; fill: #2878ad; }
.vdots { letter-spacing: 3px; padding-left: 2px; font-size: 14px; line-height: 13px; }
.custom { height: 43px; margin: 0 7px 0 8px; border-top: 1px dashed #d2d0ce; padding-top: 5px; }
.custom span { display: block; width: 31px; height: 31px; margin-left: 2px; border: 1px solid #111; padding: 3.500px; background: #fff; }
.custom svg { fill: #000; }
svg .t-pin2 { font-size: 7px; font-weight: 700; fill: #fff; }
.wells { position: relative; border-top: 1px solid #dad8d6; display: flex; flex-direction: column; padding: 11px 7px 0 5px; height: 391px; overflow: hidden; }
.wells label { padding-left: 10px; font-size: 14.300px; line-height: 20px; }
.wells div { height: 35px; margin: 7px 0 13px; background: #fff; border: 1px dashed #c0bebc; border-radius: 2px; padding-left: 13px; line-height: 32px; }
.scroll { position: absolute; right: 0; top: 3px; width: 7px; height: 62px; border-radius: 4px; background: #cfcdcb; }

/* data pane */
.data .p-head { padding: 0 10px 0 10px; }
.d-search { margin: 8px 5px 0 6px; height: 30px; background: #fff; border: 1px solid #d6d4d2; border-bottom-color: #616161; border-radius: 4px; display: flex; align-items: center; gap: 9px; padding-left: 13px; font-size: 16.200px; color: #555; }
.d-search span { padding-top: 1px; }
.table-row { height: 31px; margin-top: 11px; display: flex; align-items: center; padding-left: 16px; }
.table-row .ic:first-child { stroke: #555; margin-right: 5px; }
.table-row span { margin-left: 7px; }
.field { height: 30px; display: flex; align-items: center; padding-left: 55px; font-size: 14px; }
.field i { width: 15px; height: 15px; border: 1px solid #8a8886; border-radius: 2px; margin-top: -1px; }
.field b { width: 21px; margin-left: 11px; }

/* status bar */
.status { height: 30px; border-top: 1px solid #dad8d6; border-bottom: 1px solid #000; display: grid; align-items: center; padding: 4px 0 0 5px;
  grid-template-columns: 1650px 170px 52px 21px; color: #444; stroke: #555; }
.status span { stroke: none; }
.status svg { margin-top: -4px; }
.status .pct { margin-top: -4px; }

/* ink annotations */
.ink { position: absolute; left: 0; top: 0; z-index: 5; pointer-events: none; }
.mark { mix-blend-mode: multiply; }
.pen { stroke: #fb86f6; stroke-width: 3.500; stroke-linecap: round; stroke-linejoin: round; }
```
